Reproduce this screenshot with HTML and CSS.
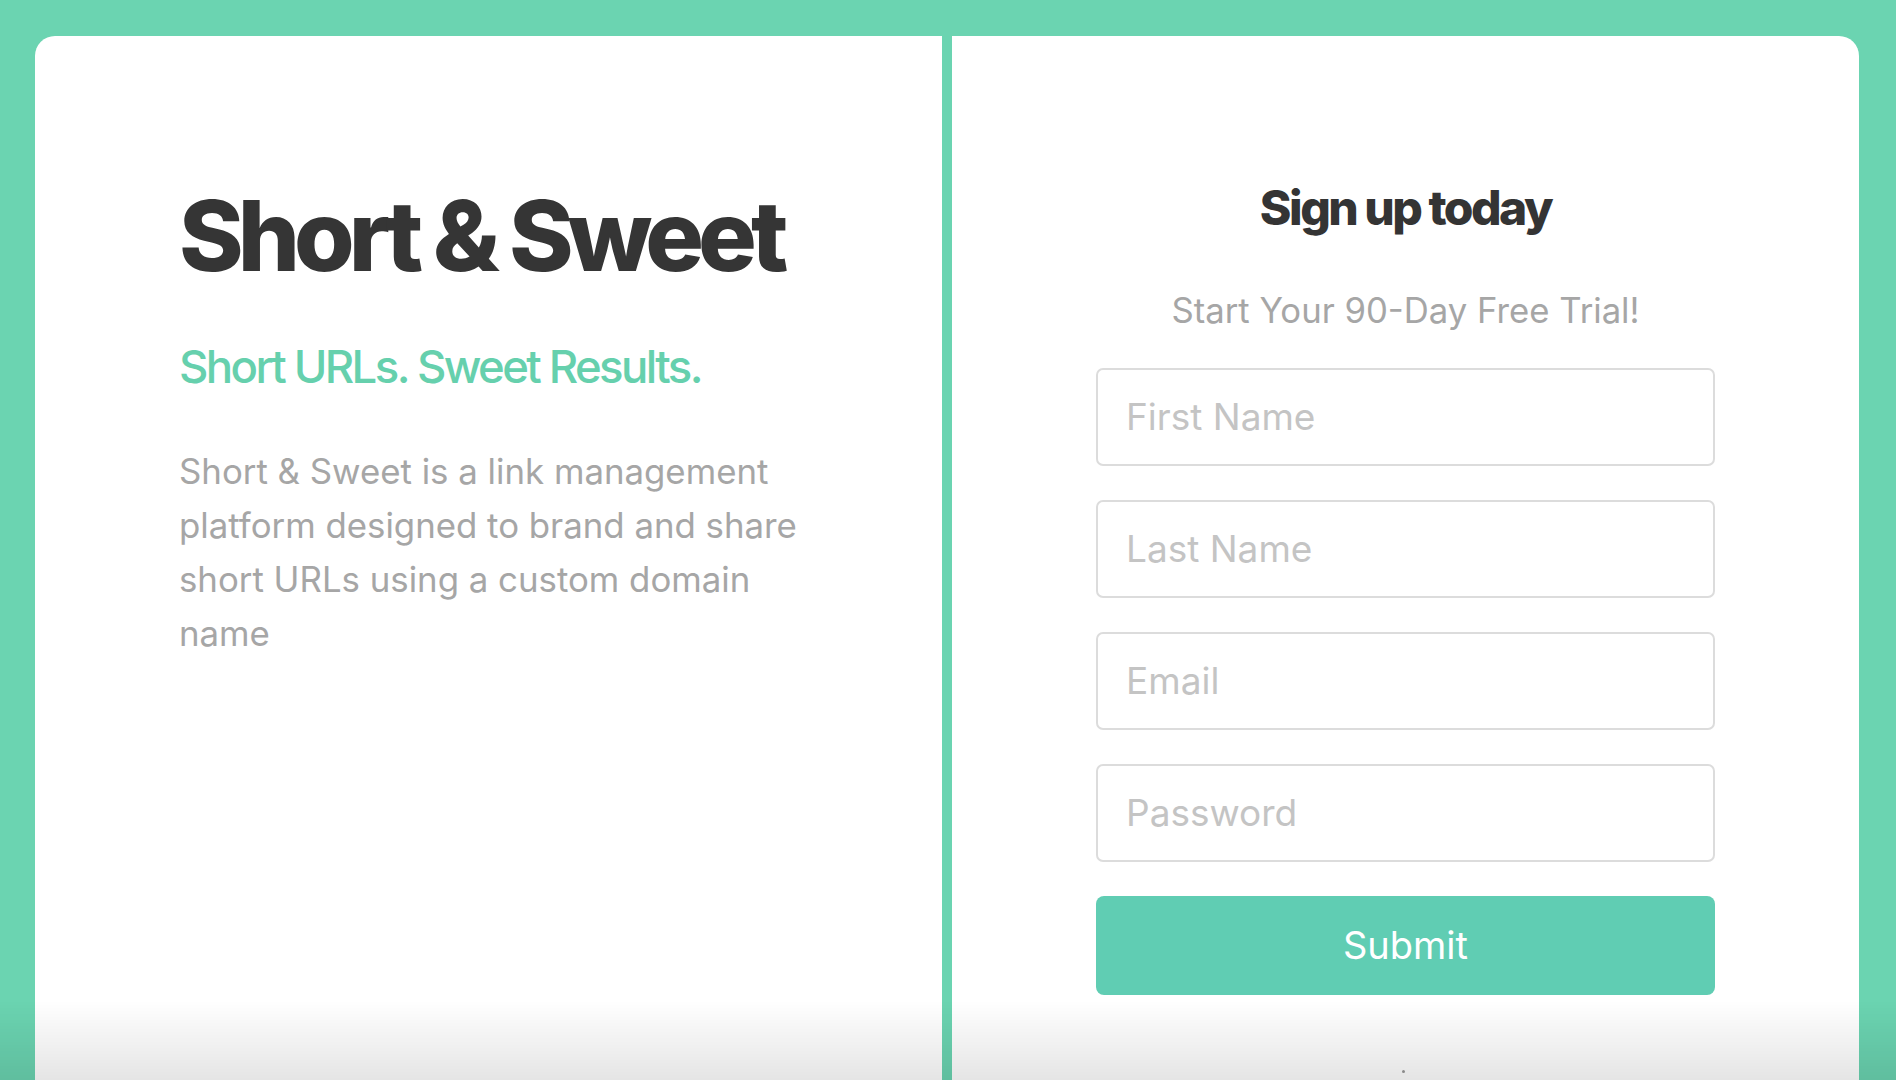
FILE: index.html
```html
<!DOCTYPE html>
<html lang="en">
<head>
<meta charset="utf-8">
<title>Short &amp; Sweet</title>
<link rel="stylesheet" href="styles.css">
</head>
<body>
<main class="card">
  <section class="intro">
    <h1 class="brand">Short &amp; Sweet</h1>
    <h2 class="tagline">Short URLs. Sweet Results.</h2>
    <p class="blurb">Short &amp; Sweet is a link management platform designed to brand and share short URLs using a custom domain name</p>
  </section>
  <section class="signup">
    <h2 class="signup-title">Sign up today</h2>
    <p class="signup-sub">Start Your 90-Day Free Trial!</p>
    <form class="form">
      <input class="field" type="text" placeholder="First Name">
      <input class="field" type="text" placeholder="Last Name">
      <input class="field" type="email" placeholder="Email">
      <input class="field" type="password" placeholder="Password">
      <button class="submit" type="button">Submit</button>
    </form>
  </section>
</main>
<div class="bottom-shade"><span class="dot"></span></div>
</body>
</html>
```

FILE: styles.css
```css
html, body {
  margin: 0;
  height: 100%;
}
body {
  background: #6bd4b1;
  padding: 36px 37px 0 35px;
  box-sizing: border-box;
  overflow: hidden;
  font-family: Inter, "Noto Sans", sans-serif;
}
.card {
  display: grid;
  grid-template-columns: minmax(0, 1fr) minmax(0, 1fr);
  gap: 10px;
  background: #6bd4b1;
  border-radius: 20px 20px 0 0;
  overflow: hidden;
  height: 1100px;
}
.intro, .signup {
  background: #fff;
  min-width: 0;
}
.intro {
  padding: 151px 110px 0 144px;
}
.brand {
  margin: 0;
  font-size: 98px;
  line-height: 1;
  font-weight: 800;
  letter-spacing: -6px;
  color: #353535;
  white-space: nowrap;
}
.tagline {
  margin: 59px 0 0;
  font-size: 45.5px;
  line-height: 1;
  font-weight: 500;
  letter-spacing: -2.6px;
  color: #66d0ad;
  white-space: nowrap;
}
.blurb {
  margin: 54px 0 0;
  max-width: 630px;
  font-size: 34.8px;
  line-height: 54px;
  color: #a6a6a6;
  font-weight: 400;
}
.signup {
  padding: 148px 144px 0;
  display: flex;
  flex-direction: column;
  align-items: stretch;
  text-align: center;
}
.signup-title {
  margin: 0;
  font-size: 48px;
  line-height: 1;
  font-weight: 800;
  letter-spacing: -2.5px;
  color: #343434;
}
.signup-sub {
  margin: 61px 0 0;
  font-size: 34.7px;
  line-height: 1;
  color: #a6a6a6;
}
.form {
  margin-top: 40px;
  display: flex;
  flex-direction: column;
  gap: 34px;
}
.field {
  height: 98px;
  box-sizing: border-box;
  border: 2px solid #dcdcdc;
  border-radius: 7px;
  padding: 0 28px;
  font-family: Inter, "Noto Sans", sans-serif;
  font-size: 37px;
  color: #555;
  background: #fff;
  outline: none;
}
.field::placeholder {
  color: #c4c4c4;
}
.submit {
  height: 99px;
  border: none;
  border-radius: 8px;
  background: #60cdb3;
  color: #fff;
  font-family: Inter, "Noto Sans", sans-serif;
  font-size: 38px;
  font-weight: 400;
}
.bottom-shade {
  position: fixed;
  left: 0;
  right: 0;
  bottom: 0;
  height: 80px;
  background: linear-gradient(to bottom, rgba(0,0,0,0), rgba(0,0,0,0.1));
  pointer-events: none;
}
.dot {
  position: absolute;
  left: 1402px;
  bottom: 7px;
  width: 3px;
  height: 3px;
  border-radius: 50%;
  background: #8a8a8a;
}
```
